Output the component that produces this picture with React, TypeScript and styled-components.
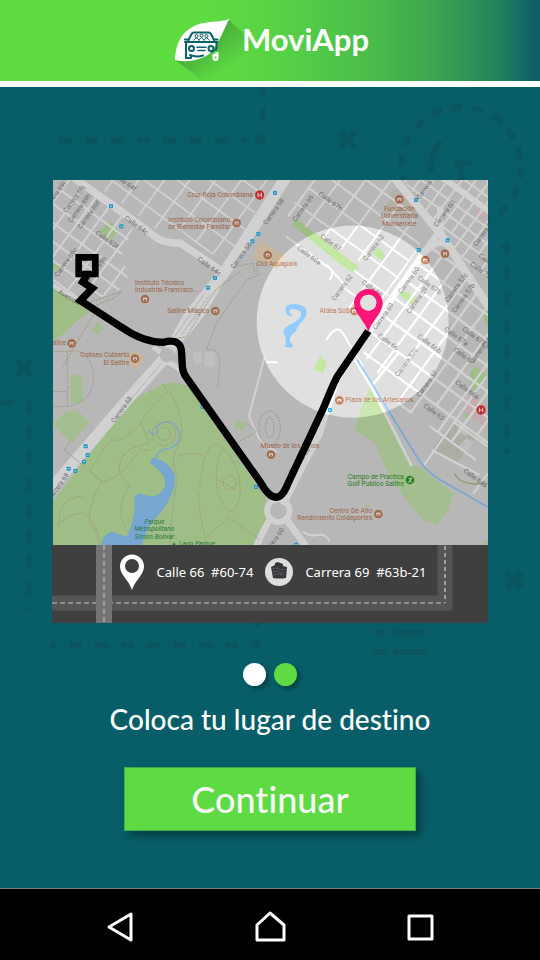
import React from "react";
import styled, { createGlobalStyle } from "styled-components";

const teal = "#085e68";
const green = "#5edb42";

const GlobalStyle = createGlobalStyle`
  * { box-sizing: border-box; }
  body { margin: 0; background: ${teal}; }
`;

const Screen = styled.div`
  display: flex;
  flex-direction: column;
  min-height: 100vh;
  font-family: Lato, "Liberation Sans", sans-serif;
  font-variant-ligatures: none;
  color: #fff;
`;

const Header = styled.header`
  display: flex;
  justify-content: center;
  align-items: flex-start;
  gap: 9px;
  height: 87px;
  padding: 16px 0 0 4px;
  border-bottom: 6px solid #fff;
  background: linear-gradient(90deg, #5edc42 0%, #5edc42 38%, #57d245 52%, #49bb4b 70%, #3ca64f 80%, #23855b 92%, #0f6467 98%, #0d5b68 100%);
`;

const Brand = styled.h1`
  margin: 0;
  font-size: 31px;
  font-weight: 700;
  line-height: 46px;
`;

const Main = styled.main`
  position: relative;
  flex: 1;
  display: flex;
  flex-direction: column;
  align-items: center;
  padding: 93px 52px 56px;
`;

const Backdrop = styled.svg`
  position: absolute;
  inset: 0;
  width: 100%;
  height: 100%;
  fill: none;
  stroke: #0a555f;
  stroke-width: 6;
`;

const TripCard = styled.section`
  position: relative;
  width: 100%;
  background: #3f3f3f;
`;

const MapDrawing = styled.svg`
  display: block;
  width: 100%;
  padding-left: 1px;
  background: ${teal};
  font-family: Roboto, sans-serif;
  font-size: 20px;
`;

const TripBar = styled.div`
  position: relative;
  height: 78px;
`;

const RoadDrawing = styled.svg`
  position: absolute;
  inset: 0;
  width: 100%;
  height: 100%;
`;

const Places = styled.div`
  position: relative;
  display: flex;
  align-items: center;
  justify-content: center;
  gap: 12px;
  height: 54px;
  padding-left: 5px;
`;

const Place = styled.div`
  display: flex;
  align-items: center;
  gap: 12px;
  font-family: "Noto Sans", sans-serif;
  font-size: 13px;
  white-space: pre;
  line-height: 20px;
`;

const Dots = styled.div`
  position: relative;
  display: flex;
  gap: 8px;
  margin-top: 40px;
`;

const Dot = styled.button<{ $active?: boolean }>`
  width: 23px;
  height: 23px;
  padding: 0;
  border: 0;
  border-radius: 50%;
  background: ${(p) => (p.$active ? green : "#fff")};
  box-shadow: 3px 3px 5px rgba(0, 0, 0, 0.3);
`;

const Prompt = styled.h2`
  position: relative;
  margin: 17px 0 0;
  font-size: 28px;
  font-weight: 500;
  line-height: 32px;
  text-align: center;
`;

const Continue = styled.button`
  position: relative;
  width: 67%;
  height: 64px;
  margin-top: 32px;
  padding: 0;
  border: 1px solid #3fae48;
  background: ${green};
  color: #f7f7f7;
  font: 500 36px/60px Lato, "Liberation Sans", sans-serif;
  font-variant-ligatures: none;
  box-shadow: 5px 5px 8px rgba(0, 0, 0, 0.35);
`;

const SystemBar = styled.nav`
  display: flex;
  justify-content: space-between;
  align-items: center;
  height: 72px;
  padding: 4px 96px 0;
  border-top: 1px solid #7b7b7b;
  background: #000;
`;

const SystemButton = styled.button`
  display: grid;
  place-items: center;
  width: 48px;
  height: 48px;
  padding: 0;
  border: 0;
  background: none;
`;

const SystemIcon = styled.svg`
  width: 32px;
  height: 36px;
  fill: none;
  stroke: #fff;
  stroke-width: 3;
  stroke-linejoin: round;
`;

function Logo() {
  return (
    <svg width="58" height="65" viewBox="177 16 58 65" overflow="visible" aria-hidden="true">
      <defs>
        <linearGradient id="leafShade" gradientUnits="userSpaceOnUse" x1="198" y1="35" x2="226" y2="72">
          <stop offset="0" stopColor="#46a83a" />
          <stop offset="0.45" stopColor="#4fbb3d" />
          <stop offset="1" stopColor="#4fbb3d" stopOpacity="0" />
        </linearGradient>
      </defs>
      <path d="M231 20L265 52V81H205L177 60Z" fill="url(#leafShade)" />
      <path d="M231.500 18C229 22 212 21 201 24C187 29 178 39 177 60C189 63 201 60 210 55C219 47 224 34 231.500 18Z" fill="#fff" />
      <path d="M214.500 52H220.500V58Q220.500 61 217.500 61Q214.500 61 214.500 58Z" fill="#fff" />
      <path d="M216.500 56.500H218.500V58.500H216.500Z" fill={green} />
      <g fill="none" stroke="#0b6169" strokeWidth="2" strokeLinejoin="round" strokeLinecap="round">
        <path d="M190.500 40L193.500 34Q194.500 32.500 196 32.500H210.500Q212 32.500 213 34L216 40" />
        <path d="M187 39.500H191M216 39.500H219.500M187 42H219.500M188 42V58H193V55.500M218.500 42V49L214 53" />
        <path d="M192 55Q198 57.500 205 55.500" />
        <circle cx="193.500" cy="48.500" r="2.500" /><circle cx="213" cy="48.500" r="2.500" />
        <path d="M199 47.200H208M200 50.500H207" strokeWidth="1.600" />
      </g>
      <g fill="none" stroke="#0b6169" strokeWidth="1">
        <circle cx="198.500" cy="36" r="1.500" /><circle cx="203.500" cy="35.500" r="1.500" /><circle cx="208.500" cy="36" r="1.500" />
        <path d="M195.500 40.500Q198.500 35.500 201 40.500Q203.500 35 206 40.500Q208.500 35.500 211.500 40.500" />
      </g>
      <path d="M211 55L218.500 50V52.500L214 55Z" fill={green} />
    </svg>
  );
}

/* Street mesh at the city's usual 36 degree bearing: nu blocks along the calles, nv along the carreras. */
function mesh(x: number, y: number, nu: number, nv: number, du: number, dv: number) {
  const at = (i: number, j: number) =>
    `${Math.round(x + i * du * 0.81 + j * dv * 0.59)} ${Math.round(y + i * du * 0.59 - j * dv * 0.81)}`;
  let d = "";
  for (let i = 0; i <= nu; i++) d += `M${at(i, i % 3 === 1 ? 1 : 0)}L${at(i, nv)}`;
  for (let j = 0; j <= nv; j++) d += `M${at(j % 2, j)}L${at(nu, j)}`;
  return d;
}

const calles: [string, number, number][] = [
  ["Calle 64c", 213, 117], ["Calle 63f", 126, 161], ["Calle 64f", 180, -12],
  ["Calle 64c", 432, 240], ["Calle 67b", 795, 45], ["Calle 67", 800, 172],
  ["Calle 60a", 731, 207], ["Calle 67b", 1092, 296], ["Calle 66", 925, 310],
  ["Calle 66", 972, 470], ["Calle 66b", 1092, 472], ["Calle 67a", 1172, 450],
  ["Calle 67a Bis", 1226, 450], ["Calle 67", 1200, 512], ["Calle 70", 1250, 255],
  ["Calle 65", 1110, 680], ["Calle 66a", 1205, 610], ["Calle 64a", 1230, 875],
  ["Calle", 1275, 230],
];

const carreras: [string, number, number][] = [
  ["Carrera 69i", -18, 90], ["Carrera 69j", 40, 100], ["Carrera 69h", 54, 130],
  ["Carrera 69f", 84, 148], ["Carrera 69c", 14, 292], ["Carrera 69b", 100, 320],
  ["Carrera 68", 640, 136], ["Carrera 68", 542, 268], ["Carrera 68", 184, 730],
  ["Carrera 68", -6, 960], ["Carrera 66", 728, 126], ["Carrera 62", 940, 244],
  ["Carrera 62", 845, 364], ["Carrera 60", 1045, 342], ["Carrera 60", 968, 450],
  ["Carrera 59", 1070, 402], ["Carrera 57c", 1185, 368], ["Carrera 57b", 1206, 400],
  ["Carrera 57c", 1035, 592], ["Carrera 57", 1100, 652], ["Carrera 56", 1260, 552],
  ["Carrera 60", 718, 884], ["Carrera 60", 640, 1125], ["Carrera 62", 1270, 200],
  ["Carrera 62", 1100, 60], ["Carrera 60", 1152, 142],
];

const busStops = [
  [174, 79], [205, 139], [666, 39], [616, 162], [598, 184], [486, 294], [465, 323],
  [1089, 60], [1184, 181], [1097, 210], [98, 799], [104, 825], [93, 845], [67, 873],
  [47, 866], [609, 921], [831, 690], [729, 1094], [449, 680],
];

const poiMarks = [
  [551, 129], [644, 225], [276, 357], [487, 393], [56, 490], [246, 536], [1039, 58],
  [1117, 240], [1176, 221], [904, 393], [859, 661], [654, 824], [976, 1002],
];

function PlaceName({ x, y, anchor, lines }: { x: number; y: number; anchor?: "start" | "middle" | "end"; lines: string[] }) {
  return (
    <text textAnchor={anchor}>
      {lines.map((line, i) => <tspan key={line} x={x} y={y + i * 22}>{line}</tspan>)}
    </text>
  );
}

function CityMap() {
  return (
    <MapDrawing viewBox="0 0 1305 1095" role="img" aria-label="Mapa de la ruta">
      <defs>
        <clipPath id="west"><path d="M0 0H71L206 94L245 130L208 225L225 300L190 340L90 365L0 312Z" /></clipPath>
        <clipPath id="northwest"><path d="M110 0H665L540 210L470 225L381 150L311 150Z" /></clipPath>
        <clipPath id="north"><path d="M770 0H1026L1050 50L1110 180L946 440L850 350L920 245L700 105Z" /></clipPath>
        <clipPath id="corner"><path d="M1050 0H1305V340L1161 145Z" /></clipPath>
        <clipPath id="east"><path d="M946 454L1150 190L1220 230L1305 370V790L1240 880L1100 800L1150 700L1060 700L930 520Z" /></clipPath>
      </defs>
      <rect width="1305" height="1095" fill="#e0e0e0" />

      <g fill="#c2e8a3">
        <path d="M0 964L236 660L331 612Q381 600 411 625L636 950L641 1020L600 1095H0Z" />
        <path d="M0 324L81 369L116 394L91 409Q60 430 36 459L0 484Z" />
        <path d="M171 124L196 149L176 179L141 154ZM0 246L20 260L10 276L0 268Z" />
        <path d="M731 116L876 230L916 259L901 279L861 252L716 134Z" />
        <path d="M976 202L999 229L991 244L959 222ZM1056 332L1091 354L1076 374L1039 344Z" />
        <path d="M1266 558L1301 585L1271 635L1249 615L1251 580ZM1293 374H1305V440L1293 425Z" />
        <path d="M801 528L821 545L811 580L781 570Z" />
      </g>
      <g fill="#cae8b0">
        <path d="M136 426L153 444L133 464L118 446ZM53 585H88V670H53ZM3 735Q56 650 108 728L53 790Z" />
        <path d="M949 625L991 690L1076 855L1101 860L1201 940L1186 990L1151 1035L1111 1020L1051 950L1001 870L966 790L903 748Z" />
        <path d="M546 724H578V748H546ZM938 970H950V982H938ZM1232 702L1245 692L1252 708L1240 720ZM1283 1090L1305 1082V1095Z" />
      </g>
      <path d="M621 184L698 226L671 264L598 234ZM238 510L276 532L250 572L215 545Z" fill="#f3dfc0" />
      <path d="M1201 725L1271 765L1211 850L1136 810Z" fill="#d5d3c8" />
      <path d="M1020 30L1070 15L1125 115L990 100Z" fill="#dcd7ca" />
      <path d="M1265 648L1305 680V750L1228 690ZM1265 90L1305 65V110L1280 115Z" fill="#f0d3d6" />
      <path d="M1222 735L1252 750L1240 768L1212 755ZM1240 775L1262 785L1240 815L1215 802Z" fill="#e9e9e9" />
      <path d="M422 515H445V550H422ZM455 518H484V560H455Z" fill="#e9e9e9" />

      <g fill="#92ccff">
        <path d="M296 835Q340 835 366 885Q370 940 321 1000Q285 1035 266 1095H145Q148 1065 176 1055L221 1070Q250 1010 244 955Q250 940 261 940Q310 965 336 920Q340 880 291 850Z" />
        <path d="M697 382Q710 366 744 376Q770 386 756 414Q735 435 727 455Q708 466 711 485Q727 495 714 503L696 501Q703 475 690 455Q695 440 719 430Q748 414 744 396Q730 384 712 388Q704 400 719 404Q712 412 700 402Z" />
      </g>
      <path d="M286 750Q315 780 310 740Q355 705 376 750Q390 790 348 806Q315 805 305 840" fill="none" stroke="#92ccff" strokeWidth="4" />

      <g fill="none" stroke="#fff" strokeWidth="6">
        <path clipPath="url(#west)" d={mesh(-150, 190, 9, 7, 48, 46)} />
        <path clipPath="url(#northwest)" d={mesh(60, 60, 8, 7, 62, 58)} strokeWidth="5" />
        <path clipPath="url(#north)" d={mesh(540, 230, 9, 9, 62, 60)} />
        <path clipPath="url(#corner)" d={mesh(980, 50, 12, 9, 34, 38)} />
        <path clipPath="url(#east)" d={mesh(830, 520, 12, 13, 50, 62)} strokeWidth="7" />
        <path d="M700 170L830 265L880 320M820 255Q850 275 830 300M640 547H674M634 535L588 708Q600 740 615 768Q630 800 672 815M820 480Q850 430 870 460L930 560M1110 860L1300 590M1200 725L1305 800M1136 810L1280 885M1260 942L1305 880M750 1055Q770 1070 795 1065Q820 1060 830 1085" />
        <path d="M905 540L955 620L1076 858M955 620L1035 520" strokeWidth="8" />
      </g>
      <g fill="none" stroke="#fff">
        <path d="M64 -6L206 94L311 174Q340 190 381 189L516 279" strokeWidth="22" />
        <path d="M700 -10L516 274L409 407L340 530L231 650L-9 930" strokeWidth="34" />
        <path d="M500 310Q440 430 370 490M330 540Q400 570 388 590M300 500L350 535" strokeWidth="16" />
        <path d="M0 316L85 368L210 445Q290 495 350 485" strokeWidth="13" />
        <path d="M1020 -10L1161 159L1310 385" strokeWidth="24" />
        <path d="M1165 -10L1310 95M1161 80V150M1120 215Q1160 170 1190 200" strokeWidth="18" />
        <path d="M1165 145L946 454L850 600L800 760L690 975" strokeWidth="20" />
        <circle cx="676" cy="992" r="34" strokeWidth="17" />
        <path d="M652 1017Q630 1050 610 1100M700 1017Q730 1060 760 1100" strokeWidth="20" />
      </g>
      <circle cx="342" cy="525" r="22" fill="#e0e0e0" />
      <g fill="none" stroke="#dcdcdc" strokeWidth="3">
        <path d="M470 345L385 465M455 340L365 470M325 550L215 680M345 565L245 680" />
      </g>

      <g fill="none" stroke="#c5bea1" strokeWidth="3" strokeDasharray="7 3">
        <path d="M331 612L345 635Q255 710 268 740L290 790Q190 805 200 880L230 920Q180 980 225 1060M268 725Q210 790 170 780L110 870L147 905Q105 970 110 1030L137 1065M34 810L147 905Q200 900 260 810H290M350 635Q395 710 384 780Q345 840 374 890Q360 960 350 1095M374 830Q420 810 455 830" />
        <path d="M0 1050Q40 1000 90 1000Q130 1015 140 1095M20 1040Q10 950 90 950M440 920Q455 780 500 795Q570 860 560 950Q535 1040 495 940Q480 860 510 798M465 1095Q440 1030 435 930M528 1012L620 1080M528 1012L460 1070M490 895L550 930" />
        <circle cx="530" cy="908" r="20" /><circle cx="333" cy="761" r="35" /><circle cx="333" cy="761" r="20" />
        <path d="M0 680H40Q120 670 122 585Q110 500 40 515H0M43 515V680M0 635H43M36 810L50 785" />
        <path d="M206 440L280 490L400 470L487 330L560 275M610 250L616 285L580 300L490 430L460 510Q500 500 500 550L494 620M540 260L600 250L606 282M100 370L205 335L190 350L110 385M130 390L70 490L30 560" />
        <ellipse cx="650" cy="745" rx="32" ry="52" /><ellipse cx="650" cy="742" rx="13" ry="30" />
        <path d="M550 790L610 755L580 730" />
      </g>
      <path d="M912 538L1101 845Q1130 885 1180 910L1305 982" fill="none" stroke="#92ccff" strokeWidth="5" />
      <path d="M1204 880Q1220 920 1305 910" fill="none" stroke="#b9b98e" strokeWidth="4" />

      <g fill="#858585">
        {calles.map(([name, x, y], i) => <text key={i} transform={`translate(${x} ${y}) rotate(36)`}>{name}</text>)}
        {carreras.map(([name, x, y], i) => <text key={i} transform={`translate(${x} ${y}) rotate(-54)`}>{name}</text>)}
        <text transform="translate(14 340) rotate(30)">Avenida</text>
      </g>
      <g fill="#c07a58">
        <PlaceName x={600} y={52} anchor="end" lines={["Cruz Roja Colombiana"]} />
        <PlaceName x={532} y={125} anchor="end" lines={["Instituto Colombiano", "de Bienestar Familiar"]} />
        <PlaceName x={672} y={259} anchor="middle" lines={["Cici Aquapark"]} />
        <PlaceName x={246} y={314} lines={["Instituto Técnico", "Industrial Francisco..."]} />
        <PlaceName x={470} y={400} anchor="end" lines={["Salitre Mágico"]} />
        <PlaceName x={39} y={496} anchor="end" lines={["Salitre"]} />
        <PlaceName x={229} y={532} anchor="end" lines={["Coliseo Cubierto", "El Salitre"]} />
        <PlaceName x={1039} y={93} anchor="middle" lines={["Fundación", "Universitaria", "Monserrate"]} />
        <PlaceName x={890} y={399} anchor="end" lines={["Aldea SoS"]} />
        <PlaceName x={877} y={667} lines={["Plaza de los Artesanos"]} />
        <PlaceName x={623} y={804} lines={["Museo de los Niños"]} />
        <PlaceName x={958} y={998} anchor="end" lines={["Centro De Alto", "Rendimiento Coldeportes"]} />
      </g>
      <g fill="#319c25">
        <PlaceName x={1053} y={896} anchor="end" lines={["Campo de Practica", "Golf Publico Salitre"]} />
        <g fill="#319654" fontStyle="italic">
          <PlaceName x={304} y={1032} anchor="middle" lines={["Parque", "Metropolitano", "Simón Bolívar"]} />
          <PlaceName x={420} y={1098} anchor="middle" lines={["▲ Lago Parque"]} />
        </g>
        <circle cx="1071" cy="900" r="13" />
      </g>
      <path d="M1066 908L1076 896H1067M1074 893L1078 889M1070 901L1077 908" fill="none" stroke="#fff" strokeWidth="3" />

      {poiMarks.map(([x, y]) => (
        <g key={`${x}-${y}`} transform={`translate(${x} ${y})`}>
          <circle r="13" fill="#c8835f" />
          <path d="M-6 -4H6V5H-6Z" fill="#fff" />
          <path d="M-3 5V0H3V5" fill="#c8835f" />
        </g>
      ))}
      {[[620, 45], [1284, 690]].map(([x, y]) => (
        <g key={x} transform={`translate(${x} ${y})`}>
          <circle r="14" fill="#ed3434" />
          <path d="M-5 -7V7M5 -7V7M-5 0H5" stroke="#fff" strokeWidth="3" />
        </g>
      ))}
      {busStops.map(([x, y]) => (
        <g key={`${x}-${y}`} transform={`translate(${x} ${y})`}>
          <rect x="-6" y="-6" width="12" height="12" rx="2" fill="#20b7f2" />
          <path d="M-3 0H3" stroke="#fff" strokeWidth="3" />
        </g>
      ))}

      <path d="M0 0H1305V1095H0ZM611 425A288 288 0 1 0 1187 425A288 288 0 1 0 611 425Z" fillRule="evenodd" fillOpacity="0.18" />

      <path
        d="M102 285L89 306L118 325L82 362L206 442Q270 487 331 487Q385 472 386 520L388 560Q390 580 400 592L621 905Q672 996 705 910L811 685Q840 614 852 591L946 453"
        fill="none" stroke="#000" strokeWidth="22"
      />
      <path d="M67 222H137V292H67ZM87 242V272H117V242Z" fillRule="evenodd" />
      <path d="M946 456C935 422 903 400 903 370A43 43 0 0 1 989 370C989 400 957 422 946 456ZM970 368A24 24 0 1 0 922 368A24 24 0 1 0 970 368Z" fill="#ff1478" fillRule="evenodd" />
      <circle cx="946" cy="368" r="24" fill="#e0e0e0" />
    </MapDrawing>
  );
}

function Decoration() {
  return (
    <Backdrop viewBox="0 87 540 801" preserveAspectRatio="xMidYMin slice" aria-hidden="true">
      <path d="M249 140.500H55" strokeDasharray="13 13" strokeDashoffset="5" />
      <path d="M256 140.500H266M263 134V138M263 108V121M263 87V95" />
      <path d="M340 132L355 147M355 132L340 147M17 361L32 376M32 361L17 376M507 573L522 588M522 573L507 588" />
      <circle cx="461" cy="167" r="60" strokeDasharray="11 10" />
      <path d="M441 141Q430 153 431 172M454 163H472M461 163V190" />
      <path d="M501 247H507V453" strokeDasharray="13 13" />
      <path d="M0 403H29V610" strokeDasharray="13 13" />
      <path d="M50 645H252" strokeDasharray="13 13" strokeDashoffset="7" />
      <path d="M251 645H260M257 640V645M257 618V627" />
      <path d="M374 632.500H386M393 632.500H426M374 652H386M393 652H426" />
    </Backdrop>
  );
}

export default function App() {
  return (
    <Screen>
      <GlobalStyle />
      <Header>
        <Logo />
        <Brand>MoviApp</Brand>
      </Header>
      <Main>
        <Decoration />
        <TripCard>
          <CityMap />
          <TripBar>
            <RoadDrawing viewBox="0 0 436 78" preserveAspectRatio="none" aria-hidden="true">
              <path d="M0 58H393V0" fill="none" stroke="#555" strokeWidth="15" />
              <path d="M0 58H393" stroke="#c4c4c4" strokeDasharray="5 3" />
              <path d="M393 1V58" stroke="#a0a0a0" strokeWidth="2" strokeDasharray="4 3" />
              <path d="M52 0V78" stroke="#747474" strokeWidth="16" />
              <path d="M52 0V78" stroke="#c8c8c8" strokeDasharray="5 3" />
            </RoadDrawing>
            <Places>
              <Place>
                <svg width="26" height="36" viewBox="0 0 26 36" aria-hidden="true">
                  <path d="M13 36C10 26 1 21 1 12.500A12 12 0 0 1 25 12.500C25 21 16 26 13 36ZM20 12A7 7 0 1 0 6 12A7 7 0 1 0 20 12Z" fill="#fff" fillRule="evenodd" />
                </svg>
                <span>{"Calle 66  #60-74"}</span>
              </Place>
              <Place>
                <svg width="28" height="28" viewBox="0 0 28 28" aria-hidden="true">
                  <circle cx="14" cy="14" r="14" fill="#dedede" />
                  <path d="M6 9L10 7V5L13 4L18 6V8L22 9L21 20Q14 21 8 20Z" fill="#38383b" />
                  <path d="M8 11L12 10L16 12L20 11M8 14L12 13L16 15L20 14M9 17L13 16L19 17" fill="none" stroke="#66666c" strokeDasharray="2 1" />
                </svg>
                <span>{"Carrera 69  #63b-21"}</span>
              </Place>
            </Places>
          </TripBar>
        </TripCard>
        <Dots>
          <Dot aria-label="Paso 1" />
          <Dot $active aria-label="Paso 2" aria-current="step" />
        </Dots>
        <Prompt>Coloca tu lugar de destino</Prompt>
        <Continue>Continuar</Continue>
      </Main>
      <SystemBar>
        <SystemButton aria-label="Atrás">
          <SystemIcon viewBox="0 0 32 36"><path d="M5 18L27 5V31Z" /></SystemIcon>
        </SystemButton>
        <SystemButton aria-label="Inicio">
          <SystemIcon viewBox="0 0 32 36"><path d="M16 4L30 16V31H3V16Z" /></SystemIcon>
        </SystemButton>
        <SystemButton aria-label="Recientes">
          <SystemIcon viewBox="0 0 32 36"><path d="M5 7H28V30H5Z" /></SystemIcon>
        </SystemButton>
      </SystemBar>
    </Screen>
  );
}
